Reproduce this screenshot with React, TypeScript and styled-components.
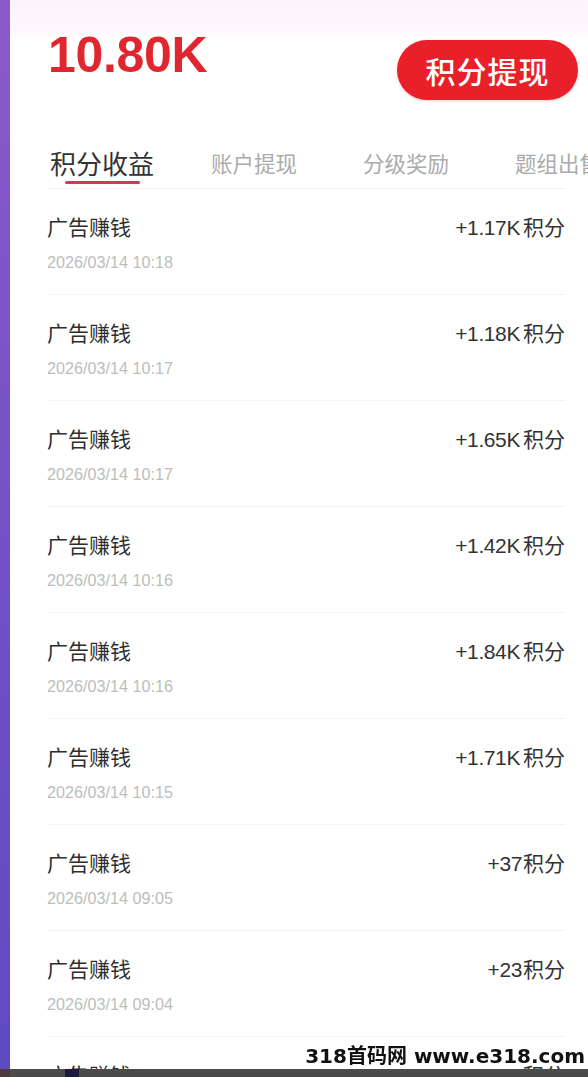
import React from 'react';
import styled, { createGlobalStyle } from 'styled-components';

const GlobalStyle = createGlobalStyle`
    html, body {
        margin: 0;
        padding: 0;
        height: 1077px;
        overflow: hidden;
        background: #fff;
    }
    body {
        font-family: "Liberation Sans", "Noto Sans CJK SC", sans-serif;
    }
`;

const Page = styled.div`
    display: flex;
    height: 1077px;
    overflow: hidden;
`;

const Strip = styled.div`
    flex: 0 0 10px;
    background: linear-gradient(180deg, #8c5ac8 0%, #7552c6 45%, #5f4ac0 100%);
`;

const Main = styled.div`
    flex: 1;
    min-width: 0;
    background: linear-gradient(180deg, #fcf4fb 0px, #fdf7fc 30px, #ffffff 40px);
`;

const Header = styled.div`
    display: flex;
    justify-content: space-between;
    align-items: flex-start;
    padding: 30px 10px 0 38px;
`;

const Balance = styled.div`
    font-family: "Liberation Sans", Arial, sans-serif;
    font-weight: 700;
    font-size: 50px;
    line-height: 50px;
    color: #e0262e;
    letter-spacing: -0.3px;
`;

const CashButton = styled.button`
    margin-top: 10px;
    width: 181px;
    height: 60px;
    border: none;
    border-radius: 30px;
    background: #e9202a;
    color: #fff;
    font-family: "Noto Sans CJK SC", sans-serif;
    font-weight: 500;
    font-size: 30px;
    letter-spacing: 1px;
    padding: 0;
    box-shadow: 0 1px 3px rgba(233, 32, 42, 0.25);
`;

const Content = styled.div`
    padding: 0 23px 0 37px;
`;

const TabBar = styled.div`
    margin-top: 46px;
    border-bottom: 1px solid #f2f2f2;
`;

const TabList = styled.div`
    display: flex;
    margin-left: -21px;
`;

const Tab = styled.div<{ $active?: boolean }>`
    flex: 0 0 152px;
    display: flex;
    flex-direction: column;
    align-items: center;
    height: 42px;
    font-family: "Noto Sans CJK SC", sans-serif;
    white-space: nowrap;

    .label {
        height: 34px;
        line-height: 34px;
        font-size: ${(p) => (p.$active ? '26px' : '21.5px')};
        color: ${(p) => (p.$active ? '#333' : '#ababab')};
    }

    .bar {
        margin-top: 1px;
        width: 75px;
        height: 3px;
        border-radius: 2px;
        background: ${(p) => (p.$active ? '#cc3f4c' : 'transparent')};
    }
`;

const Row = styled.div`
    display: flex;
    justify-content: space-between;
    align-items: flex-start;
    padding: 23px 0 20px;
    border-bottom: 1px solid #f3f3f3;
`;

const Info = styled.div`
    display: flex;
    flex-direction: column;
    gap: 10px;
`;

const Title = styled.div`
    font-family: "Noto Sans CJK SC", sans-serif;
    font-size: 21px;
    line-height: 28px;
    color: #2e2e2e;
`;

const Time = styled.div`
    font-family: "Liberation Sans", Arial, sans-serif;
    font-size: 16.2px;
    line-height: 24px;
    color: #bdbdbd;
`;

const Amount = styled.div`
    display: flex;
    align-items: baseline;
    font-family: "Liberation Sans", "Noto Sans CJK SC", sans-serif;
    font-size: 21px;
    line-height: 28px;
    color: #333;
    white-space: nowrap;

    .num {
        font-size: 21px;
        letter-spacing: -0.4px;
    }
    .unit {
        font-family: "Noto Sans CJK SC", sans-serif;
        font-size: 21px;
    }
`;

const BottomBar = styled.div`
    position: fixed;
    left: 0;
    right: 0;
    bottom: 0;
    height: 8px;
    background: #4b4b4b;
    display: flex;

    .corner {
        width: 10px;
        background: #4a3b3d;
    }
    .dot {
        margin-left: 55px;
        width: 14px;
        background: #1c1a3c;
    }
`;

const Watermark = styled.div`
    position: fixed;
    right: 3px;
    bottom: 8px;
    font-family: "DejaVu Sans", "Noto Sans CJK SC", sans-serif;
    font-weight: 700;
    font-size: 20px;
    line-height: 26px;
    color: #111;
`;

const tabs = ['积分收益', '账户提现', '分级奖励', '题组出售'];

const records = [
    { num: '+1.17K', gap: 3, time: '2026/03/14 10:18' },
    { num: '+1.18K', gap: 3, time: '2026/03/14 10:17' },
    { num: '+1.65K', gap: 3, time: '2026/03/14 10:17' },
    { num: '+1.42K', gap: 3, time: '2026/03/14 10:16' },
    { num: '+1.84K', gap: 3, time: '2026/03/14 10:16' },
    { num: '+1.71K', gap: 3, time: '2026/03/14 10:15' },
    { num: '+37', gap: 1, time: '2026/03/14 09:05' },
    { num: '+23', gap: 1, time: '2026/03/14 09:04' },
    { num: '+26', gap: 1, time: '2026/03/14 09:03' },
];

export default function App() {
    return (
        <>
            <GlobalStyle />
            <Page>
                <Strip />
                <Main>
                    <Header>
                        <Balance>10.80K</Balance>
                        <CashButton>积分提现</CashButton>
                    </Header>
                    <Content>
                        <TabBar>
                            <TabList>
                                {tabs.map((t, i) => (
                                    <Tab key={t} $active={i === 0}>
                                        <span className="label">{t}</span>
                                        <span className="bar" />
                                    </Tab>
                                ))}
                            </TabList>
                        </TabBar>
                        {records.map((r, i) => (
                            <Row key={i}>
                                <Info>
                                    <Title>广告赚钱</Title>
                                    <Time>{r.time}</Time>
                                </Info>
                                <Amount>
                                    <span className="num" style={{ marginRight: r.gap }}>
                                        {r.num}
                                    </span>
                                    <span className="unit">积分</span>
                                </Amount>
                            </Row>
                        ))}
                    </Content>
                </Main>
            </Page>
            <Watermark>318首码网 www.e318.com</Watermark>
            <BottomBar>
                <span className="corner" />
                <span className="dot" />
            </BottomBar>
        </>
    );
}
